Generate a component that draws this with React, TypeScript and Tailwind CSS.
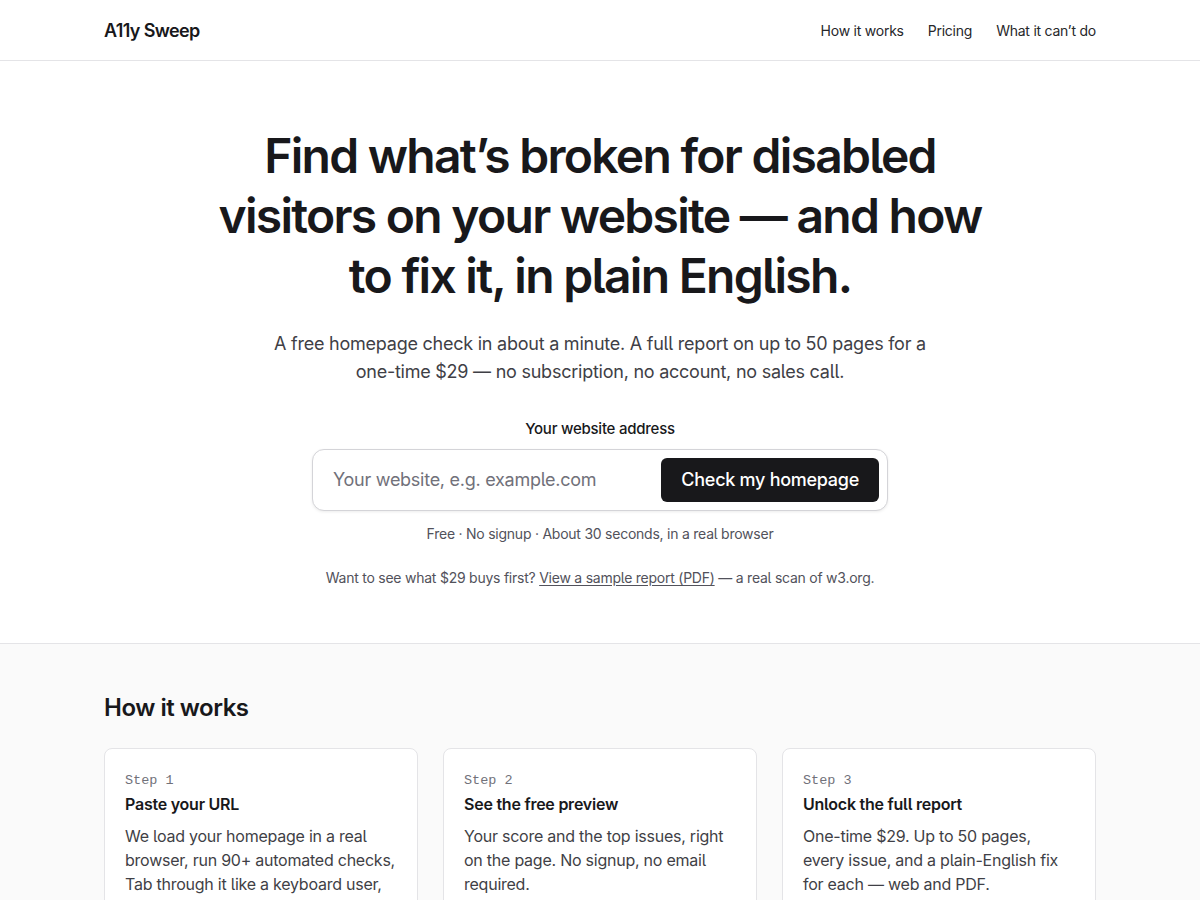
import React from 'react';

const steps = [
    {
        n: 'Step 1',
        title: 'Paste your URL',
        body: 'We load your homepage in a real browser, run 90+ automated checks, Tab through it like a keyboard user, and look for common problems.',
    },
    {
        n: 'Step 2',
        title: 'See the free preview',
        body: 'Your score and the top issues, right on the page. No signup, no email required.',
    },
    {
        n: 'Step 3',
        title: 'Unlock the full report',
        body: 'One-time $29. Up to 50 pages, every issue, and a plain-English fix for each — web and PDF.',
    },
];

export default function App() {
    return (
        <div className="min-h-screen bg-white text-[#18181b] font-['Inter',sans-serif] [font-feature-settings:'cv05'] tracking-[-0.015em]">
            {/* Header */}
            <header className="h-[61px] border-b border-[#e4e4e7]">
                <div className="max-w-[992px] mx-auto h-full flex items-center justify-between">
                    <span className="text-[18px] font-semibold tracking-[-0.035em]">A11y Sweep</span>
                    <nav className="flex items-center gap-6 text-[14px] text-[#27272a]">
                        <a href="#">How it works</a>
                        <a href="#">Pricing</a>
                        <a href="#">What it can’t do</a>
                    </nav>
                </div>
            </header>

            {/* Hero */}
            <section className="pt-[65px] pb-[55px] flex flex-col items-center text-center">
                <h1 className="max-w-[800px] text-[48px] leading-[60px] font-semibold tracking-[-0.036em]">
                    Find what’s broken for disabled visitors on your website — and how to fix it, in plain English.
                </h1>
                <p className="mt-[24px] max-w-[660px] text-[18px] leading-[28px] text-[#3f3f46]">
                    A free homepage check in about a minute. A full report on up to 50 pages for a one-time $29 — no subscription, no account, no sales call.
                </p>
                <label className="mt-[32px] text-[15px] font-medium text-[#18181b]">Your website address</label>
                <div className="mt-[8px] w-[576px] h-[62px] rounded-[12px] border border-[#d4d4d8] bg-white shadow-[0_1px_3px_rgba(0,0,0,0.08)] flex items-center pl-[20px] pr-[8px]">
                    <input
                        className="flex-1 outline-none text-[18px] placeholder:text-[#71717a] bg-transparent tracking-[-0.015em]"
                        placeholder="Your website, e.g. example.com"
                    />
                    <button className="h-[44px] px-[20px] rounded-[6px] bg-[#18181b] text-white text-[18px] font-medium tracking-[-0.015em]">
                        Check my homepage
                    </button>
                </div>
                <p className="mt-[12px] text-[14px] text-[#52525b]">Free · No signup · About 30 seconds, in a real browser</p>
                <p className="mt-[23px] text-[14px] text-[#52525b]">
                    Want to see what $29 buys first?{' '}
                    <a href="#" className="underline underline-offset-2">View a sample report (PDF)</a> — a real scan of w3.org.
                </p>
            </section>

            {/* How it works */}
            <section className="border-t border-[#e4e4e7] bg-[#fafafa] pt-[48px] pb-[64px]">
                <div className="max-w-[992px] mx-auto">
                    <h2 className="text-[24px] leading-[32px] font-semibold tracking-[-0.02em]">How it works</h2>
                    <div className="mt-[24px] grid grid-cols-3 gap-[25px]">
                        {steps.map((s) => (
                            <div key={s.n} className="bg-white border border-[#e4e4e7] rounded-[8px] px-[20px] pt-[23px] pb-[20px]">
                                <div className="font-['Liberation_Mono',monospace] tracking-normal text-[13.5px] leading-[18px] text-[#71717a]">{s.n}</div>
                                <h3 className="mt-[3px] text-[16px] leading-[22px] font-semibold">{s.title}</h3>
                                <p className="mt-[9px] text-[16px] leading-[24px] text-[#3f3f46]">{s.body}</p>
                            </div>
                        ))}
                    </div>
                </div>
            </section>
        </div>
    );
}
